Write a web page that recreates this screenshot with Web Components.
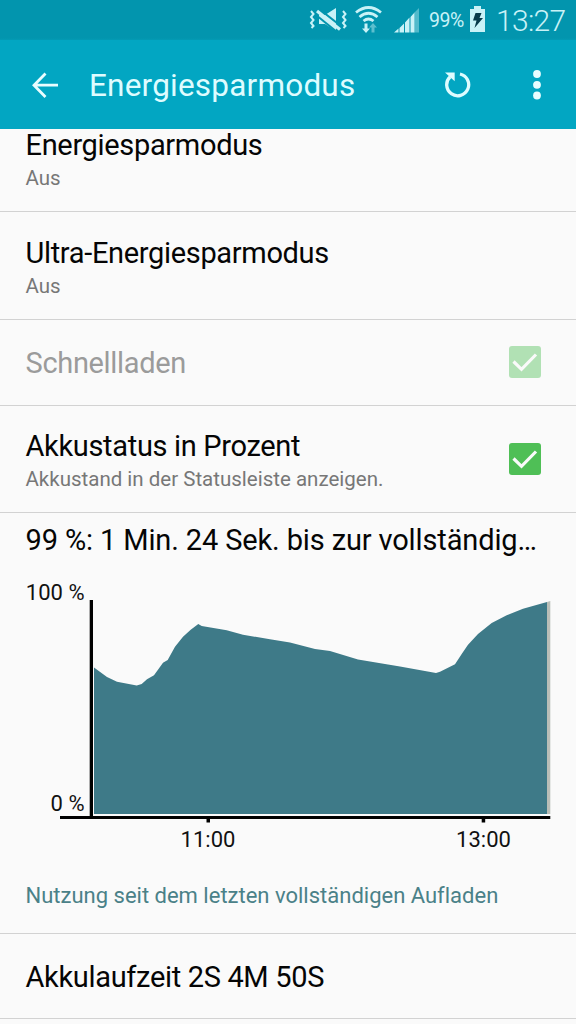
<!DOCTYPE html>
<html lang="de">
<head>
<meta charset="utf-8">
<title>Energiesparmodus</title>
<style>
    body {
        margin: 0;
        width: 576px;
        height: 1024px;
        overflow: hidden;
        background: #fafafa;
        font-family: Roboto, "Liberation Sans", sans-serif;
        font-variant-ligatures: none;
    }
</style>
</head>
<body>
<power-screen></power-screen>

<script>
class StatusBar extends HTMLElement {
    constructor() {
        super();
        this.attachShadow({ mode: 'open' });
    }

    connectedCallback() {
        this.shadowRoot.innerHTML = `
            <style>
                :host {
                    display: flex;
                    justify-content: flex-end;
                    align-items: center;
                    box-sizing: border-box;
                    height: 40px;
                    padding-right: 10px;
                    background: linear-gradient(#0295ae 0, #0295ae 38px, #039bb5 40px);
                    color: #c9f2f7;
                    white-space: nowrap;
                }
                svg { display: block; flex: none; }
                .percent { width: 36px; margin-left: 9px; font-size: 19.5px; letter-spacing: -0.5px; }
                .battery { margin-left: 4px; }
                .clock { width: 70px; margin-left: 10px; padding-top: 1px; font-size: 30px; letter-spacing: -0.7px; font-weight: 300; }
            </style>
            <svg width="112" height="40" viewBox="308 0 112 40" fill="#c9f2f7">
                <g fill="none" stroke="#c9f2f7" stroke-width="2">
                    <path d="M311 11l2.500 3-2.500 3 2.500 3-2.500 3 2.500 3-2 2M343 11l2.500 3-2.500 3 2.500 3-2.500 3 2.500 3-2 2"/>
                </g>
                <path d="M319 15h6l11-7v23l-11-7h-6z"/>
                <path d="M318.500 8.500l23 18" stroke="#0295ae" stroke-width="2.200"/>
                <path d="M316 15l21 17" stroke="#0295ae" stroke-width="2"/>
                <path d="M317 11l23 18.500" stroke="#c9f2f7" stroke-width="3.200"/>
                <g fill="none" stroke="#c9f2f7" stroke-width="2.800">
                    <path d="M356 12.500q12.500-10 25 0M359.500 17q9-7.500 18 0M363.500 21q5-4 10 0"/>
                </g>
                <path d="M364.500 23.500h3v5h2.500l-4 4.500-4-4.500h2.500z"/>
                <path d="M371.500 32.500h3v-5h2.500l-4-4.500-4 4.500h2.500z" opacity=".45"/>
                <path d="M394 32.500l4.500-4v4zM399.500 28l4.500-4.500v9h-4.500zM405 22.500l4.500-5v15H405zM410.500 17l4-4.500v20h-4z"/>
                <path d="M414.500 12.500l4.500-4.500v24.500h-4.500z" opacity=".4"/>
            </svg>
            <span class="percent">99%</span>
            <svg class="battery" width="17" height="40" viewBox="0 0 17 40">
                <path d="M1 9h4V6h7v3h4v23H1z" fill="#c9f2f7"/>
                <path d="M6.500 13h6l-2 5H14L5.500 28l2-7.500H4z" fill="#073a49"/>
            </svg>
            <span class="clock">13:27</span>
        `;
    }
}
customElements.define('status-bar', StatusBar);

class ActionBar extends HTMLElement {
    constructor() {
        super();
        this.attachShadow({ mode: 'open' });
    }

    connectedCallback() {
        this.shadowRoot.innerHTML = `
            <style>
                :host {
                    display: flex;
                    align-items: center;
                    box-sizing: border-box;
                    height: 89px;
                    padding: 2px 34px 0 31px;
                    background: #02a6c2;
                    color: #defcff;
                }
                svg { display: block; flex: none; }
                .title {
                    flex: 1;
                    margin-left: 30px;
                    font-size: 31.5px;
                    line-height: 40px;
                    letter-spacing: 0.2px;
                    white-space: nowrap;
                }
                .more { margin-left: 61px; }
            </style>
            <svg width="28" height="28" viewBox="0 0 28 28" fill="none" stroke="#e9fdff" stroke-width="2.800">
                <path d="M14.500 1.500L3 13.200l11.500 11.700M3 13.200h24"/>
            </svg>
            <span class="title"><slot></slot></span>
            <svg width="28" height="30" viewBox="0 0 28 30">
                <path d="M7.200 5.700A11 11 0 1 0 17 3" fill="none" stroke="#defcff" stroke-width="3.300"/>
                <path d="M2 1.500h9.700v8.700z" fill="#defcff"/>
            </svg>
            <svg class="more" width="10" height="32" viewBox="0 0 10 32" fill="#e9fdff">
                <circle cx="5" cy="4" r="3.900"/>
                <circle cx="5" cy="14.800" r="3.900"/>
                <circle cx="5" cy="25.500" r="3.900"/>
            </svg>
        `;
    }
}
customElements.define('action-bar', ActionBar);

class CheckMark extends HTMLElement {
    constructor() {
        super();
        this.attachShadow({ mode: 'open' });
    }

    connectedCallback() {
        this.shadowRoot.innerHTML = `
            <style>
                :host { display: block; width: 32px; height: 32px; margin-bottom: 1px; }
                :host([disabled]) { opacity: 0.42; }
                svg { display: block; }
            </style>
            <svg width="32" height="32" viewBox="0 0 32 32">
                <rect width="32" height="32" rx="3" fill="#4fbf56"/>
                <path d="M4.500 15.500l8 7.800L27 8.500" fill="none" stroke="#fafafa" stroke-width="3.200"/>
            </svg>
        `;
    }
}
customElements.define('check-mark', CheckMark);

class SettingRow extends HTMLElement {
    constructor() {
        super();
        this.attachShadow({ mode: 'open' });
    }

    connectedCallback() {
        this.shadowRoot.innerHTML = `
            <style>
                :host {
                    display: flex;
                    align-items: center;
                    justify-content: space-between;
                    box-sizing: border-box;
                    height: 108px;
                    padding: 0 35px 0 25.5px;
                    border-bottom: 1px solid #d2d2d2;
                    color: #050505;
                    white-space: nowrap;
                }
                :host([disabled]) { color: #9b9b9b; }
                .text { align-self: flex-start; margin-top: var(--text-top, 24.5px); }
                .title { font-size: 29px; line-height: 33px; letter-spacing: -0.33px; }
                .summary { font-size: 20.5px; line-height: 32px; color: #777; }
            </style>
            <div class="text">
                <div class="title"><slot></slot></div>
                <div class="summary"><slot name="summary"></slot></div>
            </div>
            <slot name="control"></slot>
        `;
    }
}
customElements.define('setting-row', SettingRow);

class BatteryChart extends HTMLElement {
    constructor() {
        super();
        this.attachShadow({ mode: 'open' });
    }

    connectedCallback() {
        this.shadowRoot.innerHTML = `
            <style>
                :host { display: block; height: 290px; }
                svg { display: block; font-size: 22px; fill: #111; }
            </style>
            <svg width="576" height="290" viewBox="0 0 576 290">
                <path fill="#3e7a88" d="M94 244V97.500L107 107l10 4.700 19.700 3.800 5-1.500 5.300-4.700 7-4 9-12.600 4.700-2.700 7.300-13.300 8-10 7.700-7 7.600-5.700 3.400 2 25 4.300 16.300 4.400 27 4.600 20 3.200 25 6.500 15 2 28 8.500 42 7 36 6.500 4-1.300 15-7.400 6.700-10.300 6.300-9.300 10-10.700 13.700-11 15-7.700 16.300-6.600L547 32V244z"/>
                <path fill="#b9beb7" d="M547 32l3.300-1v213H547z"/>
                <path fill="#000" d="M89.700 30H93v216h457.300v3H60v-3h29.700zM206.500 248h3.500v4.500h-3.500zM481.700 248h3.500v4.500h-3.500z"/>
                <g text-anchor="end">
                    <text x="84.500" y="30">100 %</text>
                    <text x="84.500" y="241">0 %</text>
                </g>
                <g text-anchor="middle">
                    <text x="208" y="277">11:00</text>
                    <text x="483.500" y="277">13:00</text>
                </g>
            </svg>
        `;
    }
}
customElements.define('battery-chart', BatteryChart);

class PowerScreen extends HTMLElement {
    constructor() {
        super();
        this.attachShadow({ mode: 'open' });
    }

    connectedCallback() {
        this.shadowRoot.innerHTML = `
            <style>
                :host { display: block; height: 1024px; overflow: hidden; }
                .scrolled { height: 83px; --text-top: 0; }
                .single { height: 86px; --text-top: 27px; }
                .percent { height: 107px; --text-top: 23.5px; }
                .runtime { height: 85px; --text-top: 26.5px; }
                .usage { height: 421px; box-sizing: border-box; border-bottom: 1px solid #d2d2d2; }
                .headline {
                    height: 57px;
                    padding-left: 25.5px;
                    font-size: 29px;
                    line-height: 55px;
                    letter-spacing: -0.13px;
                    color: #050505;
                    white-space: nowrap;
                }
                .caption {
                    padding-left: 25.5px;
                    font-size: 22px;
                    line-height: 72px;
                    color: #4a8188;
                    white-space: nowrap;
                }
            </style>
            <status-bar></status-bar>
            <action-bar>Energiesparmodus</action-bar>
            <div class="list">
                <setting-row class="scrolled">Energiesparmodus<span slot="summary">Aus</span></setting-row>
                <setting-row>Ultra-Energiesparmodus<span slot="summary">Aus</span></setting-row>
                <setting-row class="single" disabled>Schnellladen<check-mark slot="control" disabled></check-mark></setting-row>
                <setting-row class="percent">Akkustatus in Prozent<span slot="summary">Akkustand in der Statusleiste anzeigen.</span><check-mark slot="control"></check-mark></setting-row>
                <div class="usage">
                    <div class="headline">99 %: 1 Min. 24 Sek. bis zur vollständig…</div>
                    <battery-chart></battery-chart>
                    <div class="caption">Nutzung seit dem letzten vollständigen Aufladen</div>
                </div>
                <setting-row class="runtime">Akkulaufzeit 2S 4M 50S</setting-row>
            </div>
        `;
    }
}
customElements.define('power-screen', PowerScreen);
</script>
</body>
</html>
